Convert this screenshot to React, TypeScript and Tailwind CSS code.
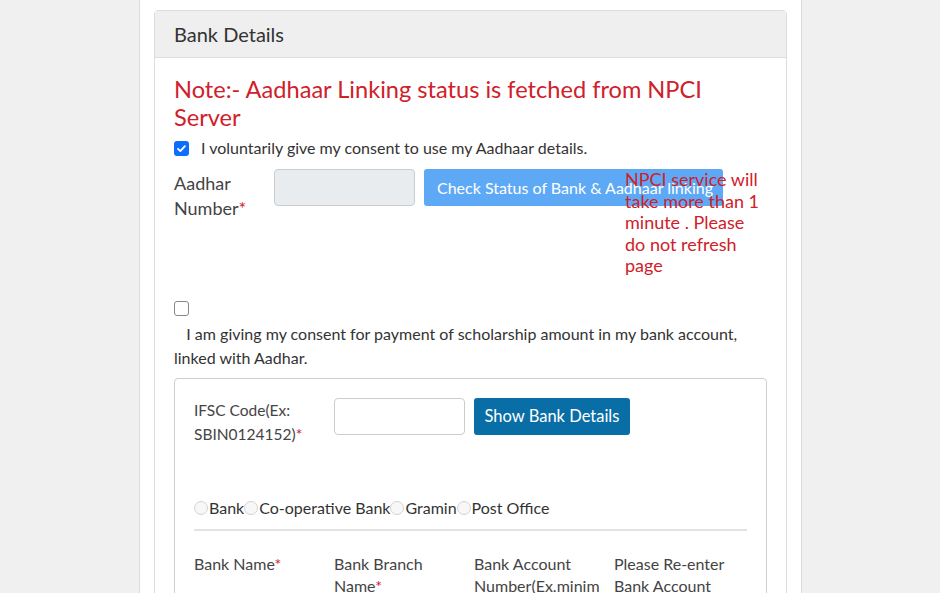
import React from "react";

const Star = () => <span className="text-[#d0202a]">*</span>;

const Radio = ({ label }: { label: string }) => (
  <label className="flex items-center">
    <span className="inline-block w-[14px] h-[14px] rounded-full border border-[#d4d4d4] bg-[#f7f7f7]" />
    <span className="ml-[1px]">{label}</span>
  </label>
);

export default function App() {
  return (
    <div className="min-h-[593px] bg-[#f0f0f0] flex justify-center overflow-hidden" style={{ fontFamily: "Lato, 'Open Sans', sans-serif" }}>
      <div className="w-[663px] ml-[1px] bg-white border-x border-[#dcdcdc] px-[14px] pt-[10px] h-[593px]">
        <div className="border border-[#dddddd] rounded-[4px] h-[640px]">
          <div className="h-[47px] bg-[#efefef] border-b border-[#dddddd] px-[19px] flex items-center text-[20px] text-[#333]">
            Bank Details
          </div>
          <div className="px-[19px] pt-[17px] text-[#333] text-[16px]">
            <div className="text-[23.6px] leading-[28px] text-[#d0202a]">
              Note:- Aadhaar Linking status is fetched from NPCI Server
            </div>
            <div className="flex items-center mt-[7px] h-[20px]">
              <span className="w-[15px] h-[15px] rounded-[3px] bg-[#0d6efd] flex items-center justify-center">
                <svg width="11" height="11" viewBox="0 0 12 12"><path d="M2.2 6.3l2.5 2.5 5-5.4" stroke="white" strokeWidth="2" fill="none" strokeLinecap="round" strokeLinejoin="round" /></svg>
              </span>
              <span className="ml-[12px]">I voluntarily give my consent to use my Aadhaar details.</span>
            </div>
            <div className="flex mt-[11px] items-start">
              <div className="w-[100px] text-[18px] leading-[25px] pt-[2px] text-[#444]">
                Aadhar Number<Star />
              </div>
              <div className="w-[141px] h-[37px] bg-[#e9ecef] border border-[#cccccc] rounded-[4px]" />
              <div className="relative ml-[9px]">
                <div className="w-[299px] h-[37px] bg-[#5ea9f5] rounded-[3px] text-white text-[16px] flex items-center pl-[13px]">
                  Check Status of Bank &amp; Aadhaar linking
                </div>
                <div className="absolute left-[201px] top-[0px] w-[140px] text-[18px] leading-[21.5px] text-[#d0202a]">
                  NPCI service will take more than 1 minute . Please do not refresh page
                </div>
              </div>
            </div>
            <div className="mt-[80px]">
              <span className="block w-[15px] h-[15px] rounded-[3px] border border-[#888] bg-white" />
            </div>
            <div className="mt-[6px] leading-[24px]">
              &nbsp;&nbsp; I am giving my consent for payment of scholarship amount in my bank account, linked with Aadhar.
            </div>
            <div className="mt-[8px] border border-[#cfcfcf] rounded-[4px] px-[19px] pt-[19px] h-[300px]">
              <div className="flex items-start">
                <div className="w-[140px] text-[15.5px] leading-[24px] text-[#444]">
                  IFSC Code(Ex: SBIN0124152)<Star />
                </div>
                <div className="w-[131px] h-[37px] border border-[#cccccc] rounded-[4px]" />
                <div className="ml-[9px] w-[156px] h-[37px] bg-[#0a6ea6] rounded-[3px] text-white text-[16.5px] flex items-center justify-center">
                  Show Bank Details
                </div>
              </div>
              <div className="flex items-center mt-[50px] h-[24px]">
                <Radio label="Bank" />
                <Radio label="Co-operative Bank" />
                <Radio label="Gramin" />
                <Radio label="Post Office" />
              </div>
              <div className="mt-[9px] border-t-2 border-[#e3e3e3]" />
              <div className="grid grid-cols-[140px_140px_140px_1fr] mt-[22px] leading-[22px] text-[#444]">
                <div className="pr-[14px]">Bank Name<Star /></div>
                <div className="pr-[14px]">Bank Branch<br />Name<Star /></div>
                <div className="w-[125px] overflow-hidden whitespace-nowrap">Bank Account<br />Number(Ex.minimum</div>
                <div className="pr-[14px]">Please Re-enter<br />Bank Account Number</div>
              </div>
            </div>
          </div>
        </div>
      </div>
    </div>
  );
}
